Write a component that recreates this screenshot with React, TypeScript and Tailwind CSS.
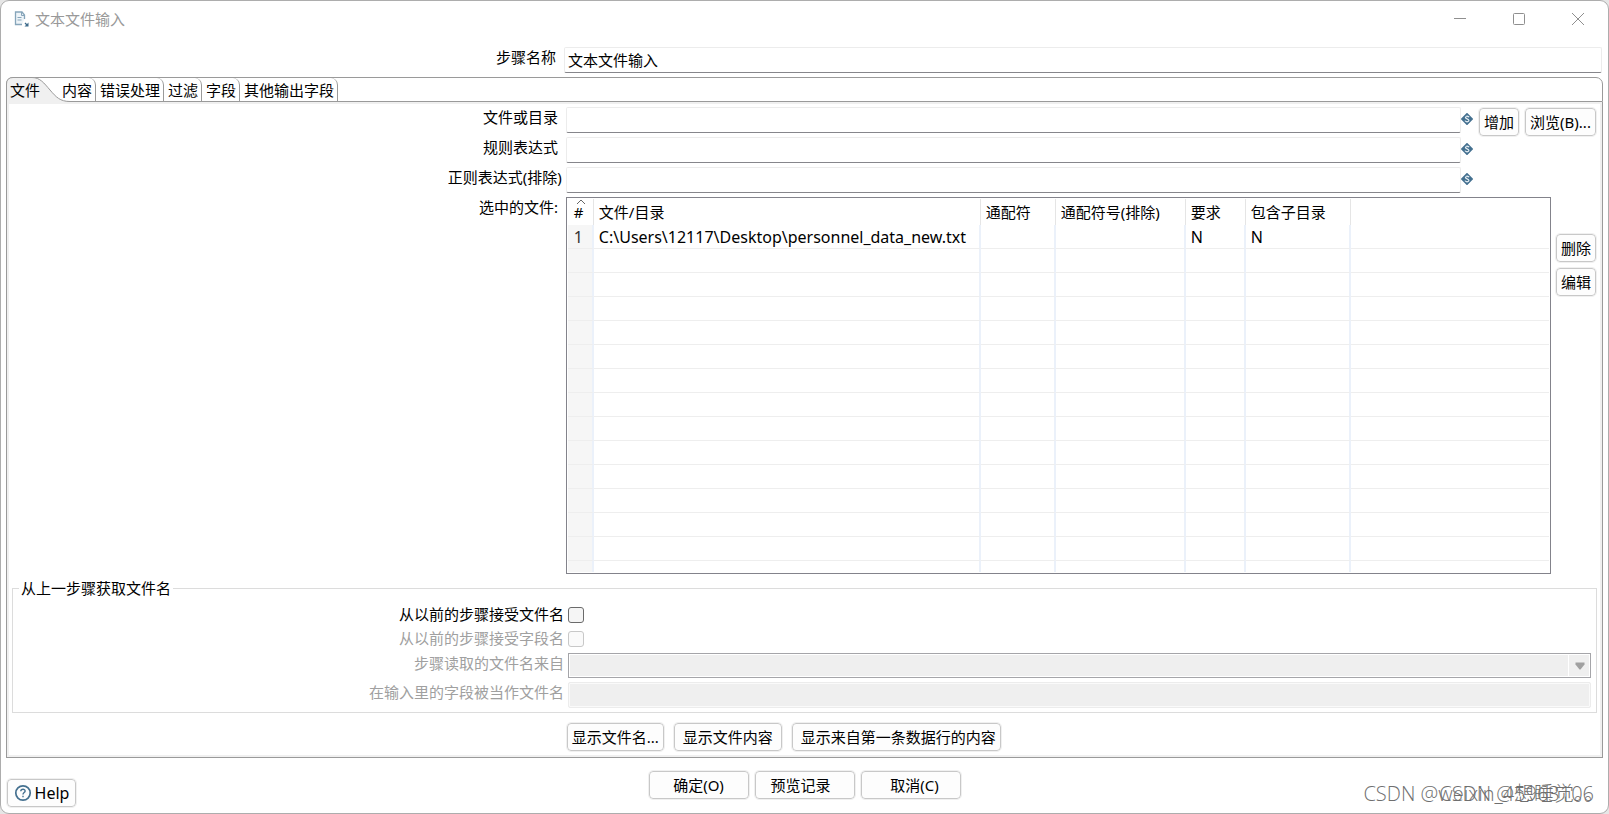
import React, { useState } from "react";
import clsx from "clsx";

const tabs = ["内容", "错误处理", "过滤", "字段", "其他输出字段"];

const fileRows = [
  {
    name: "C:\\Users\\12117\\Desktop\\personnel_data_new.txt",
    required: "N",
    subfolders: "N",
  },
];

const EMPTY_ROWS = 13;

const Button = ({
  children,
  className,
}: {
  children: React.ReactNode;
  className?: string;
}) => (
  <button
    type="button"
    className={clsx(
      "h-7 shrink-0 whitespace-pre rounded-[4px] border border-[#c8c8c8] bg-[#fdfdfd] pb-px leading-5 outline outline-1 outline-[#f0f0f0] hover:bg-[#e5f1fb]",
      className
    )}
  >
    {children}
  </button>
);

const TextBox = ({ id, value }: { id: string; value?: string }) => (
  <input
    id={id}
    type="text"
    defaultValue={value}
    className="h-[26px] w-full min-w-0 flex-1 rounded-[2px] border border-[#ececec] border-b-[#86868b] bg-white px-[3px] pb-[2px] outline-none"
  />
);

const VariableIcon = () => (
  <svg width="12" height="12" viewBox="0 0 12 12" className="mt-[6px] shrink-0">
    <path
      d="M6 0.8 11.2 6 6 11.2 0.8 6Z"
      fill="#44708f"
      stroke="#44708f"
      strokeWidth="1.6"
      strokeLinejoin="round"
    />
    <path
      d="M8 4.3C7.6 3.2 4.4 3.1 4.4 4.6 4.4 6 7.9 5.8 7.9 7.4 7.9 8.9 4.5 8.9 4 7.6"
      fill="none"
      stroke="#e6eef4"
      strokeWidth="1.2"
    />
    <path d="M6 2.3V3.5M6 8.5V9.7" stroke="#c3d3df" />
  </svg>
);

const StepIcon = () => (
  <svg width="16" height="16" viewBox="0 0 16 16" fill="none">
    <path d="M10.5 8V4L8 1H1.5V13.5H8" fill="#eef4f8" stroke="#86a5ba" strokeWidth="1.3" />
    <path d="M7.5 1V4.5H10.5M3.5 6.5H7.5M3.5 9H7.5" stroke="#86a5ba" />
    <path d="M14.5 11.5V15.5H10.5Z" fill="#3f6c8c" />
    <path d="M11 12 13 14" stroke="#3f6c8c" strokeWidth="1.3" />
  </svg>
);

const Row = ({
  id,
  label,
  disabled,
  className,
  children,
}: {
  id: string;
  label: string;
  disabled?: boolean;
  className?: string;
  children: React.ReactNode;
}) => (
  <div className={clsx("grid grid-cols-[35%_minmax(0,1fr)]", className)}>
    <label
      htmlFor={id}
      className={clsx(
        "whitespace-pre pr-1 text-right leading-5",
        disabled && "text-[#a0a0a0]"
      )}
    >
      {label}
    </label>
    {children}
  </div>
);

const TitleBar = () => (
  <header className="flex h-[38px] items-center justify-between pb-[2px] pl-[13px] pr-[23px] text-[#999]">
    <div className="flex items-center gap-[5px]">
      <StepIcon />
      <h1>文本文件输入</h1>
    </div>
    <div className="flex gap-[45px]">
      <button type="button" aria-label="最小化">
        <svg width="14" height="14" viewBox="0 0 14 14" fill="none" stroke="#8f8f8f">
          <path d="M1 6.5H13" />
        </svg>
      </button>
      <button type="button" aria-label="最大化">
        <svg width="14" height="14" viewBox="0 0 14 14" fill="none" stroke="#8f8f8f">
          <rect x="1.5" y="1.5" width="11" height="11" rx="1" />
        </svg>
      </button>
      <button type="button" aria-label="关闭">
        <svg width="14" height="14" viewBox="0 0 14 14" fill="none" stroke="#8f8f8f">
          <path d="M1 1 13 13M13 1 1 13" />
        </svg>
      </button>
    </div>
  </header>
);

const TabBar = () => (
  <div
    role="tablist"
    className="flex h-[25px] rounded-t-[7px] border border-[#9a9a9a]"
  >
    <button
      type="button"
      role="tab"
      aria-selected="true"
      className="relative w-[51px] pl-[3px] text-left leading-[25px]"
    >
      <svg
        width="66"
        height="25"
        viewBox="0 0 66 25"
        className="absolute -left-px -top-px max-w-none"
      >
        <path
          d="M0.5 25V7Q0.5 0.5 7 0.5H26C34 0.5 38 6 44 13S54 24.5 64 24.5H66V25Z"
          fill="#f0f0f0"
        />
        <path
          d="M0.5 25V7Q0.5 0.5 7 0.5H26C34 0.5 38 6 44 13S54 24.5 64 24.5H66"
          fill="none"
          stroke="#9a9a9a"
        />
      </svg>
      <span className="relative">文件</span>
    </button>
    {tabs.map((tab) => (
      <button
        key={tab}
        type="button"
        role="tab"
        aria-selected="false"
        className="relative rounded-tr-[7px] border-r border-[#9a9a9a] pl-[4px] pr-[3px] leading-[25px]"
      >
        {tab}
      </button>
    ))}
  </div>
);

const FileTable = () => (
  <div className="min-w-0 flex-1 border border-[#83838b] p-px">
    <table className="w-full table-fixed border-separate border-spacing-0 text-left">
      <colgroup>
        <col className="w-[26px]" />
        <col className="w-[387px]" />
        <col className="w-[75px]" />
        <col className="w-[130px]" />
        <col className="w-[60px]" />
        <col className="w-[105px]" />
        <col />
      </colgroup>
      <thead>
        <tr className="h-[26px] *:border-r *:border-[#e5e5e5] *:pl-[5px] *:font-normal *:last:border-r-0">
          <th className="relative">
            <svg
              width="10"
              height="6"
              viewBox="0 0 10 6"
              className="absolute left-2 top-0"
            >
              <path d="M1 5 5 1 9 5" fill="none" stroke="#666" />
            </svg>
            <span className="pl-px">#</span>
          </th>
          <th>文件/目录</th>
          <th>通配符</th>
          <th>通配符号(排除)</th>
          <th>要求</th>
          <th>包含子目录</th>
          <th />
        </tr>
      </thead>
      <tbody>
        {fileRows.map((row, index) => (
          <tr
            key={index}
            className="h-6 text-base leading-[21px] *:border-b *:border-r-2 *:border-b-[#eee] *:border-r-[#ebf1fa] *:pl-[5px] *:pt-[2px] *:last:border-r-0"
          >
            <td className="bg-[#f6f6f6] text-[#333]">
              <span className="pl-px">{index + 1}</span>
            </td>
            <td className="whitespace-nowrap">{row.name}</td>
            <td />
            <td />
            <td>{row.required}</td>
            <td>{row.subfolders}</td>
            <td />
          </tr>
        ))}
        {Array.from({ length: EMPTY_ROWS }).map((_, index) => (
          <tr
            key={index}
            className="h-6 *:border-b *:border-r-2 *:border-b-[#eee] *:border-r-[#ebf1fa] *:first:bg-[#f6f6f6] *:last:border-r-0"
          >
            <td />
            <td />
            <td />
            <td />
            <td />
            <td />
            <td />
          </tr>
        ))}
        <tr className="h-[11px] *:border-r-2 *:border-[#ebf1fa] *:first:bg-[#f6f6f6] *:last:border-r-0">
          <td />
          <td />
          <td />
          <td />
          <td />
          <td />
          <td />
        </tr>
      </tbody>
    </table>
  </div>
);

const FilenameSource = () => {
  const [accept, setAccept] = useState(false);
  return (
    <fieldset className="mx-[3px] mt-[3px] border border-[#dcdcdc] pb-1 pl-1 pr-[5px]">
      <legend className="ml-[2px] px-[2px] pb-px pt-px leading-5">
        从上一步骤获取文件名
      </legend>
      <Row id="accept" label="从以前的步骤接受文件名" className="mt-[5px] h-6">
        <input
          id="accept"
          type="checkbox"
          checked={accept}
          onChange={(e) => setAccept(e.target.checked)}
          className="mt-[3px] size-4 appearance-none rounded-[3px] border border-[#6b6b6b] bg-[#f5f5f5] checked:bg-[#44708f]"
        />
      </Row>
      <Row id="fieldName" label="从以前的步骤接受字段名" disabled className="h-6">
        <input
          id="fieldName"
          type="checkbox"
          disabled
          className="mt-[3px] size-4 appearance-none rounded-[3px] border border-[#c8c8c8] bg-[#fafafa]"
        />
      </Row>
      <Row id="fromStep" label="步骤读取的文件名来自" disabled className="mt-px">
        <div className="relative">
          <select
            id="fromStep"
            disabled
            className="block h-[25px] w-full appearance-none border border-[#a5a5a9] bg-[#efefef] shadow-[inset_0_0_0_1px_#fff]"
          >
            <option></option>
          </select>
          <div className="pointer-events-none absolute inset-y-px right-px flex w-[22px] items-center justify-center border-l border-white">
            <svg width="10" height="8" viewBox="0 0 10 8">
              <path d="M0.5 0.5H9.5V2.5L5.5 7.5H4.5L0.5 2.5Z" fill="#a0a0a0" />
            </svg>
          </div>
        </div>
      </Row>
      <Row id="fromField" label="在输入里的字段被当作文件名" disabled className="mt-1">
        <input
          id="fromField"
          type="text"
          disabled
          className="h-[26px] w-full rounded-[2px] border border-[#ececec] bg-[#efefef] shadow-[inset_0_0_0_1px_#fafafa]"
        />
      </Row>
    </fieldset>
  );
};

const App = () => {
  return (
    <div className="min-h-screen bg-[#e6e6e6] font-['Noto_Sans','Noto_Sans_CJK_SC',sans-serif] text-[15px] text-black">
      <main className="relative flex min-h-screen flex-col rounded-[9px] border border-[#adadad] bg-white">
        <TitleBar />

        <div className="mt-2 grid grid-cols-[35%_minmax(0,1fr)] pl-1 pr-[6px]">
          <label htmlFor="stepName" className="pr-2 text-right leading-5">
            步骤名称
          </label>
          <TextBox id="stepName" value="文本文件输入" />
        </div>

        <section className="mx-[5px] mt-1 flex flex-1 flex-col">
          <TabBar />
          <div className="flex-1 border border-t-0 border-[#9a9a9a]">
            <div className="h-full border-2 border-[#f0f0f0] pb-1 pt-[3px]">
              <Row id="file" label="文件或目录 " className="h-[30px]">
                <div className="flex items-start pr-1">
                  <TextBox id="file" />
                  <VariableIcon />
                  <Button className="ml-[6px] mt-px w-10">增加</Button>
                  <Button className="ml-[6px] mt-px w-[71px]">浏览(B)...</Button>
                </div>
              </Row>
              <Row id="mask" label="规则表达式 " className="h-[30px]">
                <div className="flex items-start pr-[127px]">
                  <TextBox id="mask" />
                  <VariableIcon />
                </div>
              </Row>
              <Row id="exclude" label="正则表达式(排除)" className="h-[30px]">
                <div className="flex items-start pr-[127px]">
                  <TextBox id="exclude" />
                  <VariableIcon />
                </div>
              </Row>
              <div className="grid grid-cols-[35%_minmax(0,1fr)]">
                <span className="whitespace-pre pr-1 text-right leading-5">
                  {"选中的文件: "}
                </span>
                <div className="flex gap-[5px] pr-1">
                  <FileTable />
                  <div className="flex flex-col gap-[6px] pt-[37px]">
                    <Button className="w-10">删除</Button>
                    <Button className="w-10">编辑</Button>
                  </div>
                </div>
              </div>

              <FilenameSource />

              <div className="ml-[35%] mt-[10px] flex gap-[10px] pl-px">
                <Button className="w-[97px]">显示文件名...</Button>
                <Button className="w-[108px]">显示文件内容</Button>
                <Button className="w-[209px]"> 显示来自第一条数据行的内容</Button>
              </div>
            </div>
          </div>
        </section>

        <footer className="grid grid-cols-[1fr_auto_1fr] items-start px-[6px] pb-[6px] pt-[13px]">
          <Button className="mt-2 flex w-[69px] items-center justify-center gap-[3px] text-base">
            <svg
              width="18"
              height="18"
              viewBox="0 0 18 18"
              fill="none"
              stroke="#44708f"
              strokeWidth="1.7"
            >
              <circle cx="9" cy="9" r="7.2" />
              <path d="M6.8 7.2C6.9 4.6 11.2 4.7 11.1 7.1 11 8.6 9 8.6 9 10.4M9 11.7V13.2" strokeWidth="1.4" />
            </svg>
            Help
          </Button>
          <div className="flex gap-[6px]">
            <Button className="w-[100px]">确定(O)</Button>
            <Button className="w-[100px]">{"预览记录  "}</Button>
            <Button className="w-[100px]">{"  取消(C)"}</Button>
          </div>
        </footer>

        <p className="pointer-events-none absolute bottom-[5px] right-[14px] whitespace-nowrap font-['Open_Sans','Noto_Sans_CJK_SC',sans-serif] text-[20px] font-light leading-7 text-[#6f6f6f]">
          CSDN @weixin_45963106
        </p>
        <p className="pointer-events-none absolute bottom-[5px] right-[4px] whitespace-nowrap font-['Open_Sans','Noto_Sans_CJK_SC',sans-serif] text-[20px] font-light leading-7 text-[#6f6f6f]">
          CSDN @想睡觉。。
        </p>
      </main>
    </div>
  );
};

export default App;
